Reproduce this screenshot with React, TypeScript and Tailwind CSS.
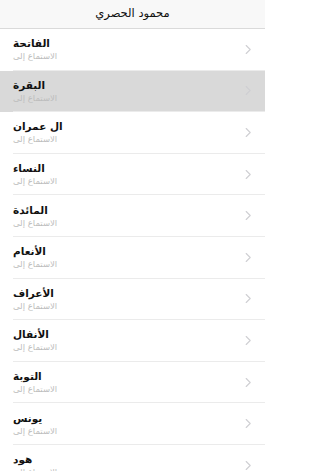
import React from "react";

const surahs = [
  "الفاتحة",
  "البقرة",
  "ال عمران",
  "النساء",
  "المائدة",
  "الأنعام",
  "الأعراف",
  "الأنفال",
  "التوبة",
  "يونس",
  "هود",
];

function Chevron() {
  return (
    <svg width="7" height="11" viewBox="0 0 7 11" fill="none" className="shrink-0">
      <path d="M1.2 1.5l4 4-4 4" stroke="#cfcfd3" strokeWidth="1.1" strokeLinecap="round" strokeLinejoin="round" />
    </svg>
  );
}

export default function App() {
  return (
    <div
      className="w-[265px] h-[471px] overflow-hidden bg-white"
      style={{ fontFamily: '"DejaVu Sans", "Noto Sans", sans-serif' }}
    >
      <div className="h-[29px] bg-[#f8f8f8] border-b border-[#dadada] flex items-center justify-center">
        <span className="text-[11.5px] font-medium text-[#111]" dir="rtl">
          محمود الحصري
        </span>
      </div>
      <div className="flex flex-col">
        {surahs.map((s, i) => (
          <div
            key={s}
            className={`h-[41.6px] flex pl-[13px] ${i === 1 ? "bg-[#d9d9d9]" : "bg-white"}`}
          >
            <div className="flex-1 flex items-center pr-[13px] border-b border-[#ebebeb]">
              <div className="flex-1 flex flex-col items-start">
                <span className="text-[10.5px] font-bold leading-[14px] text-[#111]" dir="rtl">
                  {s}
                </span>
                <span className="text-[8.5px] leading-[12px] text-[#bdbdbd]" dir="rtl">
                  الاستماع إلى
                </span>
              </div>
              <Chevron />
            </div>
          </div>
        ))}
      </div>
    </div>
  );
}
